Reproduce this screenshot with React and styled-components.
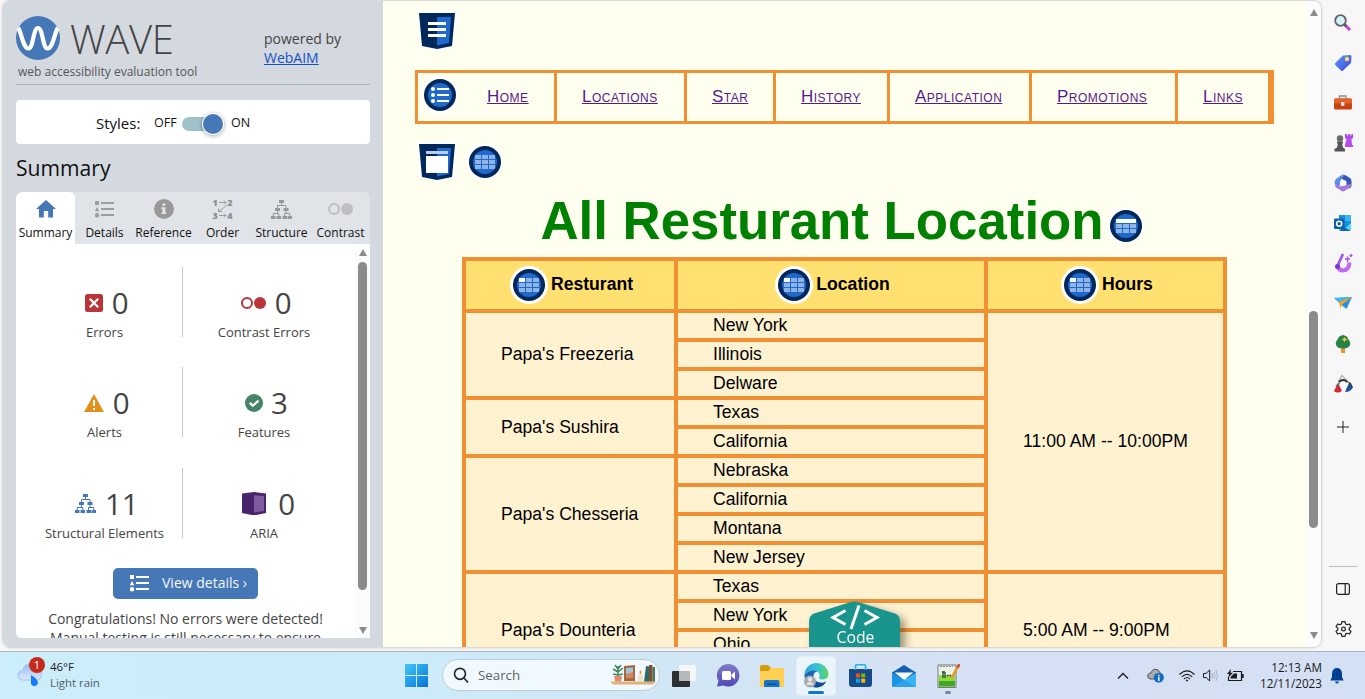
import React from "react";
import styled, { createGlobalStyle } from "styled-components";

const Global = createGlobalStyle`
  * { box-sizing: border-box; }
  html, body { margin: 0; padding: 0; overflow: hidden; background: #f7f7f7; }
  svg { display: block; flex: none; }
`;

const UI = `"Open Sans", "Noto Sans", sans-serif`;
const ARIAL = `"Liberation Sans", Arial, sans-serif`;
const ORANGE = "#f09033";
const BLUE = "#4677b7";

/* ---------- window ---------- */
const Screen = styled.div`
  width: 1365px; height: 699px; overflow: hidden;
  display: flex; flex-direction: column;
  background: #f7f7f7; font-family: ${UI};
`;
const Main = styled.div`
  height: 651px; display: flex; padding: 1px 0 4px 3px;
`;
const Frame = styled.div`
  width: 1318px; height: 646px; display: flex; overflow: hidden;
  border-radius: 8px; box-shadow: 0 0 3px rgba(0,0,0,.35);
`;

/* ---------- evaluation panel ---------- */
const Panel = styled.aside`
  width: 380px; background: #d4d9e0; padding: 0 13px 9px;
  display: flex; flex-direction: column;
`;
const PanelHead = styled.header`
  height: 84px; border-bottom: 1px solid #b0b4b9;
  display: flex; color: #444; flex: none;
`;
const Brand = styled.div`width: 248px; padding-top: 15px;`;
const BrandRow = styled.div`display: flex; gap: 10px; height: 44px;`;
const BrandName = styled.div`
  font: 300 40px/46px ${UI}; letter-spacing: -.35px; color: #444;
`;
const Tagline = styled.div`
  font-size: 12px; line-height: 16px; margin: 4px 0 0 2px; white-space: nowrap; color: #555; letter-spacing: .01px;
`;
const Powered = styled.div`
  padding-top: 28px; font-size: 14px; line-height: 19px; white-space: nowrap;
  a { color: #1450c8; text-decoration: underline; }
`;
const StylesBox = styled.div`
  margin-top: 15px; height: 44px; background: #fff; border-radius: 4px; flex: none;
  display: flex; align-items: center; padding-left: 80px; padding-top: 1px; color: #111;
  font-size: 12.5px;
`;
const StylesLabel = styled.span`font-size: 15px; width: 58px;`;
const OffLabel = styled.span`width: 28px;`;
const Track = styled.span`
  width: 41px; height: 14px; border-radius: 7px; background: linear-gradient(90deg,#9fc1c9 32px,transparent 32px);
  display: flex; justify-content: flex-end; align-items: center; margin: 3px 8px 0 0;
`;
const Knob = styled.span`
  width: 20px; height: 20px; border-radius: 50%; background: ${BLUE};
  box-shadow: 0 0 0 1px #fff, 0 1px 4px 1px rgba(0,0,0,.35);
`;
const Heading = styled.h2`
  margin: 9px 0 0; height: 39px; font: 400 21.1px/30px ${UI}; color: #111; flex: none;
`;
const Tabs = styled.nav`
  height: 52px; display: grid; grid-template-columns: repeat(6, 59px);
  background: #e0e3e8; border-radius: 6px 6px 0 0; overflow: hidden; flex: none;
`;
const Tab = styled.div`
  display: flex; flex-direction: column; align-items: center;
  padding-top: 5px; gap: 3px; font-size: 12px; line-height: 18px; color: #111; white-space: nowrap;
  background: ${(p) => (p.$on ? "#fff" : "transparent")};
  border-radius: ${(p) => (p.$on ? "6px 6px 0 0" : 0)};
`;
const TabIcon = styled.div`height: 24px; display: flex; align-items: center;`;
const Body = styled.section`
  height: 394px; display: flex; background: #fff; overflow: hidden;
  border-radius: 0 0 0 5px; flex: none;
`;
const Results = styled.div`
  width: 339px; padding-top: 23px; color: #444; display: flex; flex-direction: column; align-items: center;
`;
const Stats = styled.div`
  align-self: flex-start; margin-left: 9px;
  display: grid; grid-template-columns: 158px 162px; row-gap: 30.3px; flex: none;
`;
const Stat = styled.div`
  height: 70px; display: flex; flex-direction: column; align-items: center;
  padding: 16px 0 0 ${(p) => (p.$divided ? 2 : 0)}px;
  border-right: ${(p) => (p.$divided ? "1px solid #c4c6c8" : "0")};
`;
const StatTop = styled.div`
  height: 40px; display: flex; align-items: center; gap: ${(p) => p.$gap || 8.5}px; font-size: 29.5px; line-height: 40px;
  padding-left: ${(p) => (p.$gap > 10 ? 9 : 5)}px;
`;
const StatLabel = styled.div`font-size: 13px; line-height: 18px; white-space: nowrap;`;
const ViewButton = styled.button`
  margin-top: 30.4px; width: 145px; height: 31px; border: 0; border-radius: 5px; flex: none;
  background: ${BLUE}; color: #f4f7fb; font: 400 14px/20px ${UI}; padding: 0 0 0 17px;
  display: flex; align-items: center; gap: 13px; white-space: nowrap;
`;
const Message = styled.p`
  margin: 10px 0 0; font-size: 14px; line-height: 19px; text-align: center; white-space: nowrap; flex: none;
`;

/* ---------- scrollbar ---------- */
const Scroll = styled.div`
  width: 15px; background: #fcfcfc; display: flex; flex-direction: column; align-items: center;
  padding: ${(p) => p.$pad}; flex: none;
`;
const Arrow = styled.i`
  border: 4.5px solid transparent; border-top-width: 0; border-bottom: 7px solid #8b8b8b;
  transform: ${(p) => (p.$down ? "rotate(180deg)" : "none")};
  margin-top: ${(p) => (p.$down ? "auto" : 0)};
`;
const Thumb = styled.i`
  width: 9px; border-radius: 5px; background: #8b8b8b;
  height: ${(p) => p.$h}px; margin-top: ${(p) => p.$top}px;
`;

/* ---------- restaurant page ---------- */
const Page = styled.main`
  width: 923px; background: #fffff0; position: relative; overflow: hidden;
  font-family: ${ARIAL}; color: #000; padding: 8px 0 0 32px;
`;
const MarkerRow = styled.div`
  display: flex; align-items: center; gap: ${(p) => p.$gap || 0}px; height: 42px; padding-left: 1px;
  margin-top: ${(p) => p.$top || 0}px;
  svg + svg { margin-top: 2px; }
`;
const Menu = styled.ul`
  list-style: none; margin: 19px 0 0; padding: 0; width: 859px; height: 54px; display: flex;
  border: 3px solid ${ORANGE};
`;
const MenuItem = styled.li`
  width: ${(p) => p.$w}px; border-right: 3px solid ${ORANGE};
  display: flex; align-items: center; padding-left: ${(p) => (p.$first ? 3 : 25)}px;
  gap: 28px; font-size: 17px; letter-spacing: .5px; font-variant: small-caps; flex: none; white-space: nowrap;
  a { color: #551a8b; text-decoration: underline; }
`;
const MenuMark = styled.span`display: flex; margin-top: -4px;`;
const Caption = styled.h1`
  margin: 8px 0 0 47px; width: 765px; height: 67px; display: flex; justify-content: center; gap: 3px;
  font: 700 52.8px/62px ${ARIAL}; color: #008000; white-space: nowrap; padding-right: 4px;
  svg { margin-top: 17px; }
`;
const Table = styled.div`
  margin-left: 47px; width: 765px; padding: 4px; background: ${ORANGE};
  display: grid; grid-template-columns: 208px 306px 235px; gap: 4px;
  grid-template-rows: 48px repeat(13, 25px); font-size: 17.6px;
`;
const HeadCell = styled.div`
  background: #ffe070; display: flex; align-items: center; justify-content: center; gap: 3px; font-weight: 700;
  padding-left: 3px; span { margin-top: -2px; }
`;
const Cell = styled.div`
  background: #fef2d0; padding-left: 35px; display: flex; align-items: center; white-space: nowrap;
  grid-column: ${(p) => p.$col}; grid-row: ${(p) => p.$row} / span ${(p) => p.$span || 1};
`;
const CodeTab = styled.div`
  position: absolute; left: 426px; top: 600px; width: 91px; height: 60px; color: #fff;
  font-family: ${UI}; font-size: 15.8px; line-height: 20px; text-align: center; padding: 26px 0 0 2px;
  filter: drop-shadow(5px 4px 4px rgba(60,50,20,.5));
  svg { position: absolute; left: 0; top: 0; }
  span { position: relative; }
`;

/* ---------- browser side bar ---------- */
const Side = styled.aside`
  width: 44px; display: flex; flex-direction: column; align-items: center; padding-top: 1.5px;
`;
const SideSlot = styled.div`
  height: ${(p) => p.$h || 40.15}px; display: flex; align-items: center; justify-content: center; flex: none;
`;
const SideRule = styled.div`width: 28px; height: 1px; background: #bdbdbd; margin: 116px 0 2px; flex: none;`;

/* ---------- task bar ---------- */
const Taskbar = styled.footer`
  height: 48px; border-top: 1px solid #a8b3bb; flex: none; display: flex; color: #1a1a1a;
  background: linear-gradient(90deg, #ccedfa 0%, #cdebf9 30%, #d3e5f5 55%, #d6e0f4 75%, #d4e0f3 100%);
  font-size: 11.5px; line-height: 16px;
`;
const Weather = styled.div`
  width: 394px; padding: 4px 0 0 17px; display: flex; gap: 4px; white-space: nowrap;
`;
const Dim = styled.div`color: #52616b;`;
const WeatherText = styled.div`padding-top: 3px; font-size: 11.4px;`;
const Slot = styled.div`
  width: 44px; height: 47px; display: flex; align-items: center; justify-content: center; flex: none;
  position: relative;
`;
const ActiveTile = styled.div`
  width: 38px; height: 38px; border-radius: 4px; background: #e9f4fb; box-shadow: 0 0 0 1px rgba(255,255,255,.35);
  display: flex; align-items: center; justify-content: center;
`;
const Pip = styled.i`
  position: absolute; bottom: 5px; height: 3px; border-radius: 2px;
  width: ${(p) => p.$w}px; background: ${(p) => p.$c};
`;
const Search = styled.div`
  width: 218px; height: 32px; border-radius: 17px; background: #f0f9fd; border: 1px solid #b9cfdb;
  margin: 7px 2px 0 4px; padding: 0 3px 0 10px; display: flex; align-items: center; gap: 9px;
  font-size: 13.3px; color: #5d666c; flex: none;
  span { flex: 1; }
`;
const Tray = styled.div`
  margin-left: auto; display: flex; align-items: center; padding-right: 21px; height: 47px;
`;
const TraySlot = styled.div`width: ${(p) => p.$w}px; display: flex; justify-content: ${(p) => p.$end ? "flex-end" : "flex-start"}; flex: none;`;
const Clock = styled.div`width: 79px; text-align: right; font-size: 11.7px; white-space: nowrap; line-height: 16.5px; margin-top: -1px;`;

/* ---------- drawings ---------- */
const WaveLogo = () => (
  <svg width="44" height="44" viewBox="0 0 44 44">
    <circle cx="22" cy="22" r="22" fill={BLUE} />
    <path d="M2.200 12C5 15 7 32.500 12.500 32.500C17.500 32.500 17 12 22 12C27 12 26.500 32.500 31.500 32.500C37 32.500 39 15 41.800 12" fill="none" stroke="#fff" strokeWidth="4.200" />
  </svg>
);
const ListGlyph = ({ c = "#9a9ea2" }) => (
  <svg width="19" height="17" viewBox="0 0 19 17" fill={c}>
    <path d="M0 0h4v4H0zM2 6l2.300 4.300H-.3zM6 1h13v2H6zM6 7h13v2H6zM6 13h13v2H6z" />
    <circle cx="2" cy="14.300" r="2.200" />
  </svg>
);
const Home = () => (
  <svg width="20" height="18" viewBox="0 0 20 18"><path d="M10 0L20 9H17V17.500H12.200V11H7.800V17.500H3V9H0z" fill={BLUE} /></svg>
);
const Info = () => (
  <svg width="20" height="20" viewBox="0 0 20 20"><circle cx="10" cy="10" r="10" fill="#999" /><path d="M8.600 4.500h2.600v2.300H8.600zM7.500 8.300h3.800v5.200h1v1.600H7.500v-1.600h1V9.900h-1z" fill="#e6e8eb" /></svg>
);
const OrderGlyph = styled.div`
  position: relative; width: 20px; height: 22px; color: #8c8f92; font: 700 9px/9px ${UI};
  display: flex; flex-direction: column; justify-content: space-between;
  svg { position: absolute; left: 0; top: 1px; }
`;
const Pair = styled.span`display: flex; justify-content: space-between;`;
const Order = () => (
  <OrderGlyph>
    <Pair><b>1</b><b>2</b></Pair>
    <Pair><b>3</b><b>4</b></Pair>
    <svg width="20" height="20" viewBox="0 0 20 20" fill="none" stroke="#9a9da0"><path d="M6 3.500h7M11 1.500l2 2l-2 2M6 16.500h7M11 14.500l2 2l-2 2M13.500 6.500L5.500 12.500M5.500 9.500v3h3.500" /></svg>
  </OrderGlyph>
);
const Tree = ({ c = "#96999c" }) => (
  <svg width="21" height="19" viewBox="0 0 21 19" fill={c}>
    <path d="M8 0h5v3H8zM4 8h5v3H4zM12.500 8h5v3h-5zM0 16h4.500v3H0zM5.500 16H10v3H5.500zM11.500 16H16v3h-4.500zM16.500 16H21v3h-4.500z" />
    <path d="M10.500 3v2.500M6.500 8V5.500H15V8M6.500 11v2.500M2.200 16v-2.500H7.800V16M15 11v2.500M13.500 16v-2.500H18.800V16" fill="none" stroke={c} strokeWidth="1" />
  </svg>
);
const Rings = ({ c, s = 12, w = 25 }) => (
  <svg width={w} height={s} viewBox={`0 0 ${w} ${s}`}>
    <circle cx={s / 2} cy={s / 2} r={s / 2 - 1} fill="none" stroke={c} strokeWidth="2" />
    <circle cx={w - s / 2} cy={s / 2} r={s / 2} fill={c} />
  </svg>
);
const ErrorMark = () => (
  <svg width="18" height="18" viewBox="0 0 18 18"><rect width="18" height="18" rx="2.500" fill="#b93538" /><path d="M4.800 4.800l8.400 8.400M13.200 4.800l-8.400 8.400" stroke="#fff" strokeWidth="2.200" /></svg>
);
const AlertMark = () => (
  <svg width="20" height="18" viewBox="0 0 20 18"><path d="M10 0L20 18H0z" fill="#e48f1a" /><path d="M9 6h2v6H9zM9 14h2v2H9z" fill="#fff" /></svg>
);
const CheckMark = () => (
  <svg width="18" height="18" viewBox="0 0 18 18"><circle cx="9" cy="9" r="9" fill="#458466" /><path d="M4.800 8.800l3 3l5.700-5.200" fill="none" stroke="#fff" strokeWidth="2.200" /></svg>
);
const AriaMark = () => (
  <svg width="24" height="23" viewBox="0 0 24 23"><path d="M0 1.500L12 0L24 1.500V21L12 23.500L0 21z" fill="#48256b" /><path d="M12 3.300L22 4V19L12 20.500z" fill="#7f5c9e" /></svg>
);

const Shield = ({ kind }) => (
  <svg width="42" height="42" viewBox="0 0 42 42">
    <path d="M0 1L42 1L39 37.500L21 42L3.500 37.500z" fill="#fff" />
    <path d="M3 4H39L36 37L21 40L6 37z" fill="#01285a" />
    <path d="M21 8H35L33 34L21 36.500z" fill="#1f69cb" />
    {kind === "header" ? (
      <path d="M12 13h18v3H12zM12 19h18v3H12zM12 25h18v3H12z" fill="#fff" />
    ) : (
      <>
        <path d="M10 11h22v3H10z" fill="#b8cdeb" />
        <path d="M10 16h22v17H10z" fill="#fff" />
      </>
    )}
  </svg>
);
const Badge = ({ children }) => (
  <svg width="38" height="38" viewBox="0 0 38 38">
    <circle cx="19" cy="19" r="19" fill="#fff" />
    <circle cx="19" cy="19" r="16" fill="#01285a" />
    <circle cx="19" cy="19" r="12" fill="#1f69cb" />
    {children}
  </svg>
);
const GridMark = ({ head }) => (
  <Badge>
    {[0, 1, 2].map((r) => [0, 1, 2].map((c) => (
      <rect key={`${r}${c}`} x={9 + c * 7} y={12 + r * 5} width="6" height="4" fill={head === "first" && r + c === 0 ? "#fff" : "#8fb3e5"} />
    )))}
    {head === "row" && <rect x="9" y="12" width="20" height="4" fill="#fff" />}
  </Badge>
);
const ListMark = () => (
  <Badge>
    <path d="M16 12h12v2H16zM16 18h12v2H16zM16 24h12v2H16z" fill="#fff" />
    <circle cx="12" cy="13" r="2" fill="#fff" /><circle cx="12" cy="19" r="2" fill="#fff" /><circle cx="12" cy="25" r="2" fill="#fff" />
  </Badge>
);

const sideIcons = [
  <svg width="18" height="18" viewBox="0 0 18 18"><path d="M10 10l6 6" stroke="#c239e8" strokeWidth="3" /><path d="M9 9l3 3" stroke="#555" strokeWidth="2.500" /><circle cx="6.500" cy="6.500" r="5.300" fill="#d5f0fb" stroke="#626568" strokeWidth="1.800" /></svg>,
  <svg width="18" height="18" viewBox="0 0 18 18"><defs><linearGradient id="tag" x2="1" y2="1"><stop stopColor="#5a9bff" /><stop offset="1" stopColor="#4246d8" /></linearGradient></defs><path d="M9 1.500L16 1Q17.500 1 17.500 2.500L17 9L9 16.500Q8 17.500 7 16.500L1.300 11Q.5 10 1.300 9z" fill="url(#tag)" /><circle cx="13" cy="5" r="2.200" fill="#ffd95b" /></svg>,
  <svg width="18" height="15" viewBox="0 0 18 15"><path d="M5.500 4V1H12V4" fill="none" stroke="#8d8f93" strokeWidth="1.300" /><rect x="0" y="3.500" width="18" height="11" rx="1.500" fill="#c8430f" /><path d="M0 5q0-1.500 1.500-1.500h15Q18 3.500 18 5v3.500H0z" fill="#e2622b" /><rect x="7" y="7" width="3.500" height="4" rx="1" fill="#d9dce0" /></svg>,
  <svg width="19" height="19" viewBox="0 0 19 19"><path d="M11 1h1.800v1.500h1.300V1h2v1.500h1.300V1H19v4l-1.500 1l.5 6h1v2h-8v-2l1.500-6L11 5z" fill="#b74bea" /><circle cx="6" cy="5.500" r="3.200" fill="#6a6b6e" /><path d="M3 8.500h6v2H8l1 4l2 1.500v2.500H.5V16L3 14.500L4 10.500H3z" fill="#555659" /></svg>,
  <svg width="18" height="18" viewBox="0 0 18 18"><path d="M2 5L8 .8Q10 0 11.500 1L8.500 4Q6 6 6 9L5.500 13L2 11Q.5 10 .5 8Z" fill="#5b8ce8" /><path d="M11 1L16 4Q17.500 5 17.500 7V12Q17 14 15 14.500L12.500 11V7.500L7.500 4.500z" fill="#3557b5" /><path d="M1 10L5.500 12.500L12 11L17 10Q17.500 12.500 16 13.500L10.500 17Q9 17.800 7.500 17L2 13.500Q.6 12.500 1 10z" fill="#a47bd8" /><circle cx="9" cy="9" r="3" fill="#f7f7f7" /></svg>,
  <svg width="18" height="16" viewBox="0 0 18 16"><path d="M5 0H17V15H5z" fill="#1490df" /><path d="M11 0h6v6h-6z" fill="#35b8f1" /><path d="M5 9l6.500 4L17 8v7H5z" fill="#50d9ff" /><path d="M10 12l7 4H5z" fill="#1066b5" /><rect y="3.500" width="10.500" height="10.500" rx="1" fill="#0f5fad" /><circle cx="5.200" cy="8.700" r="2.500" fill="none" stroke="#fff" strokeWidth="1.500" /></svg>,
  <svg width="19" height="20" viewBox="0 0 19 20"><path d="M3.500 13Q5 17.500 9 17.500Q15 17 15.500 9.500" fill="none" stroke="#c068ef" strokeWidth="4" /><path d="M3.500 13L8.500 2" stroke="#a35bea" strokeWidth="2.800" strokeLinecap="round" /><circle cx="3.500" cy="13.500" r="2.500" fill="#7b35d5" /><path d="M13.500 9V3.500M11 6h5M17 1v3M15.500 2.500h3" fill="none" stroke="#b052ee" strokeWidth="1.500" /></svg>,
  <svg width="18" height="13" viewBox="0 0 18 13"><path d="M0 1L18 0L12.500 12L8 8.500z" fill="#2a8fe8" /><path d="M0 1L18 0L5 5z" fill="#3fb8f5" /><path d="M5 5L18 0L7.500 8L6.500 12z" fill="#f5a11e" /></svg>,
  <svg width="16" height="18" viewBox="0 0 16 18"><path d="M6 12h4v6H6z" fill="#e49a26" /><path d="M8 0Q13 1 13 4Q16 7 15 10Q13 14 8 13.500Q3 14 1 10Q0 7 3 4Q3 1 8 0" fill="#27824a" /><path d="M9.500 2l1 1.500l1.800 1l-1.800 1l-1 1.500l-1-1.500l-1.800-1l1.800-1z" fill="#f5c73b" /></svg>,
  <svg width="19" height="20" viewBox="0 0 19 20"><path d="M4 8L8 1.500L13 7" fill="none" stroke="#bbb" strokeWidth="1.500" /><path d="M5 8Q9 4 13.500 8" fill="none" stroke="#333" strokeWidth="2" /><path d="M4 9L8 17Q3 20 0 17z" fill="#d22a32" /><path d="M1.500 12L6 7L5 12z" fill="#666" /><path d="M15 9L19 13Q17 18 11 18z" fill="#194f9c" /><path d="M13 7l4 2l2 5z" fill="#27313d" /></svg>,
  <svg width="12" height="12" viewBox="0 0 12 12" stroke="#222"><path d="M6 0V12M0 6H12" /></svg>,
];
const PanelIcon = () => (
  <svg width="14" height="12" viewBox="0 0 14 12" fill="none" stroke="#222" strokeWidth="1.200"><rect x=".6" y=".6" width="12.800" height="10.800" rx="2" /><path d="M9.200 .6V11.400" /></svg>
);
const Gear = () => (
  <svg width="17" height="18" viewBox="0 0 24 24" fill="none" stroke="#222" strokeWidth="1.700" strokeLinejoin="round"><path d="M9.800 1.500h4.400l.7 3.300l2.200 1.200l3.200-1.100l2.200 3.800l-2.500 2.300v2l2.500 2.300l-2.200 3.800l-3.200-1.100l-2.200 1.200l-.7 3.300H9.800l-.7-3.300L6.900 18l-3.200 1.100l-2.200-3.800L4 13v-2L1.500 8.700l2.200-3.800L6.900 6l2.200-1.200z" /><circle cx="12" cy="12" r="2.700" /></svg>
);

const WeatherIcon = styled.div`
  position: relative; width: 29px; height: 34px; 
  svg { position: absolute; left: 0; top: 0; }
  span { position: absolute; left: 12px; top: 1px; width: 16px; text-align: center; color: #fff; font-size: 11px; line-height: 15px; }
`;
const Rain = () => (
  <WeatherIcon>
    <svg width="29" height="34" viewBox="0 0 29 34">
      <defs><linearGradient id="cl" x2="0" y2="1"><stop stopColor="#9dbcf4" /><stop offset="1" stopColor="#dbe8fb" /></linearGradient></defs>
      <path d="M5 24Q1 23 1 19.500Q1 15 6 14.500Q7 8 13 8L24 15Q26 23 20 24z" fill="url(#cl)" stroke="#8daaea" strokeWidth=".6" />
      <path d="M14 19Q21 23 21 27A3.700 3.700 0 0 1 14 28z" fill="#147eff" />
      <circle cx="20" cy="9" r="8" fill="#c42b1c" />
    </svg>
    <span>1</span>
  </WeatherIcon>
);
const Windows = () => (
  <svg width="23" height="23" viewBox="0 0 23 23"><defs><linearGradient id="win" x2="1" y2="1"><stop stopColor="#43c8f8" /><stop offset="1" stopColor="#0673d4" /></linearGradient></defs><path d="M0 0h11v11H0zM12 0h11v11H12zM0 12h11v11H0zM12 12h11v11H12z" fill="url(#win)" /></svg>
);
const Lens = () => (
  <svg width="16" height="16" viewBox="0 0 16 16" fill="none" stroke="#23282b" strokeWidth="1.700"><circle cx="7" cy="6.800" r="5.500" /><path d="M11 11L15 15.500" /></svg>
);
const Shelf = () => (
  <svg width="46" height="22" viewBox="0 0 46 22">
    <path d="M0 17.500h46L43 20.500H3z" fill="#dfb27c" />
    <path d="M4 12h8l-1 5.500H5z" fill="#e38b6c" />
    <path d="M8 12V2M8 8L3 5M8 8l5-4M8 11l-5-1M8 11l5-1M8 5L5 1M8 5l3-4" stroke="#47875b" strokeWidth="1.500" />
    <path d="M14 2l11-1v16H14z" fill="#a5683f" /><path d="M16 4l7-.5V14h-7z" fill="#9cc7dc" /><path d="M16 10l7-2v6h-7z" fill="#d78662" />
    <path d="M28 11h5v6.500h-5z" fill="#f1e2c5" /><path d="M30.500 6q2 2.500 0 4.500q-2-2 0-4.500" fill="#ef9d2d" />
    <path d="M34 17.500L36 2l3 .5V17.500z" fill="#2d6a6d" /><path d="M39 1h3.500v16.500H39z" fill="#80502d" /><path d="M42.500 3H45v14.500h-2.500z" fill="#4a7361" />
  </svg>
);
const TaskView = () => (
  <svg width="24" height="22" viewBox="0 0 24 22"><rect x="7" y="0" width="17" height="16" rx="1" fill="#f4f6f8" /><rect y="6" width="18" height="16" rx="1" fill="#2d2f31" /><path d="M7 6h11v10H7z" fill="#b5b8ba" /></svg>
);
const Chat = () => (
  <svg width="23" height="23" viewBox="0 0 23 23"><defs><linearGradient id="ch" x2="0" y2="1"><stop stopColor="#8278c8" /><stop offset="1" stopColor="#4e4ab7" /></linearGradient></defs><path d="M11.500 0A11.300 11.300 0 1 1 6.500 21.600L0 22.500L1.500 17A11.300 11.300 0 0 1 11.500 0z" fill="url(#ch)" /><rect x="5" y="7" width="9" height="9" rx="1.500" fill="#fff" /><path d="M14.500 10.500L18 7.500V15.500L14.500 12.500z" fill="#fff" /></svg>
);
const Folder = () => (
  <svg width="24" height="22" viewBox="0 0 24 22"><path d="M0 2Q0 0 2 0H8l3 3H22q2 0 2 2V10H0z" fill="#d79a0c" /><path d="M0 6h8l3-3h11q2 0 2 2v15.500q0 1.500-2 1.500H1.500Q0 22 0 20.500z" fill="#ffd052" /><path d="M4 22V17q0-2 2-2h11.500q2 0 2 2V22z" fill="#1774ca" /><path d="M7 18.500h9.500V20H7z" fill="#0b4e93" /></svg>
);
const Edge = () => (
  <svg width="25" height="25" viewBox="0 0 25 25">
    <defs><linearGradient id="ed" x2="1"><stop stopColor="#2fa6e0" /><stop offset=".55" stopColor="#34c3d0" /><stop offset="1" stopColor="#62d65c" /></linearGradient></defs>
    <path d="M12.500 0A12 12 0 0 1 24.500 11Q24.500 16 19 16.500Q15 16.500 15 14.500Q17 11 13.500 8.500Q7 5 .5 12A12 12 0 0 1 12.500 0z" fill="url(#ed)" />
    <path d="M.5 12Q7 5 13.500 8.500Q9 9 9.500 14.500Q11 20.500 21.500 19.500Q18 24.500 12 24.500A12 12 0 0 1 .5 12z" fill="#1866b8" />
    <path d="M9 11Q8 18 14 20Q19 21 22.500 18Q19 24.500 12 24.500Q5 20 9 11z" fill="#114c92" />
    <circle cx="6" cy="18.500" r="6" fill="#a8aaad" /><circle cx="6" cy="16.300" r="2.200" fill="#e2e3e4" /><path d="M2.500 22q0-3 3.500-3t3.500 3z" fill="#e2e3e4" />
  </svg>
);
const Store = () => (
  <svg width="23" height="24" viewBox="0 0 23 24"><path d="M0 5H23V20q0 3-3 3H3q-3 0-3-3z" fill="#184a86" /><path d="M6.500 6V2q0-1.300 1.300-1.300h7.400Q16.500.7 16.500 2V6" fill="none" stroke="#28b2ed" strokeWidth="1.600" /><path d="M7 9.500h4v4H7z" fill="#f25022" /><path d="M12.200 9.500h4v4h-4z" fill="#7fba00" /><path d="M7 14.700h4v4H7z" fill="#00a4ef" /><path d="M12.200 14.700h4v4h-4z" fill="#ffb900" /></svg>
);
const Mail = () => (
  <svg width="24" height="22" viewBox="0 0 24 22"><path d="M0 7.500L12 0L24 7.500V13H0z" fill="#145fac" /><path d="M2.500 7.500h19L12 15z" fill="#f7fbff" /><path d="M0 7.500L24 22H1.500Q0 22 0 20.500z" fill="#1c93e5" /><path d="M24 7.500V20.500Q24 22 22.500 22H1L24 7.500z" fill="#37b4f4" /><path d="M12 15L24 22H1z" fill="#28a3ec" /></svg>
);
const Notepad = () => (
  <svg width="23" height="24" viewBox="0 0 23 24"><path d="M1 1H19V23.500H1z" fill="#eef2e8" stroke="#777" /><path d="M2 11H18V22.500H2z" fill="#8ddc3c" /><path d="M2 17H18V22.500H2z" fill="#42a52c" /><path d="M3 2.500h13" stroke="#888" strokeDasharray="2 1" /><path d="M6 14V8M8 14V8M5 8h3M10 11.500h1.500M12.500 11.500H14" stroke="#243" strokeWidth="1.300" /><path d="M21.500 1.500L14.500 14" stroke="#e79a2e" strokeWidth="2.600" /><path d="M22.500 0L20.500 3.500" stroke="#cf4e3b" strokeWidth="2.600" /></svg>
);
const Cloud = () => (
  <svg width="17" height="15" viewBox="0 0 17 15"><path d="M3 11Q0 10 .8 7Q1.500 5 4 5Q5 1 9 1.300Q12 1.500 13 5Q15.500 5.500 16 8V11z" fill="#a8aaac" stroke="#555" /><circle cx="11.700" cy="9.800" r="4.900" fill="#0f6cc9" /><path d="M11 6.800h1.500v1.400H11zM11 9h1.500v4H11z" fill="#fff" /></svg>
);
const Wifi = () => (
  <svg width="16" height="12" viewBox="0 0 16 12" fill="none" stroke="#1c1c1c" strokeWidth="1.100"><path d="M.5 4.500Q8-2.800 15.500 4.500M2.800 6.800Q8 1.800 13.200 6.800M5 9Q8 6 11 9" /><circle cx="8" cy="10.500" r="1" fill="#1c1c1c" stroke="none" /></svg>
);
const Volume = () => (
  <svg width="16" height="13" viewBox="0 0 16 13" fill="none" stroke="#1c1c1c"><path d="M.5 4.500H3L6.700 1V12L3 8.500H.5z" /><path d="M9 4.500Q10 6.500 9 8.500" stroke="#8a95a5" /><path d="M11 2.800Q13 6.500 11 10.200M13 1Q16 6.500 13 12" stroke="#a9b5c6" /></svg>
);
const Battery = () => (
  <svg width="17" height="14" viewBox="0 0 17 14"><path d="M6 2.500H14.500V11.500H1.500V8" fill="none" stroke="#1c1c1c" strokeWidth="1.200" /><path d="M7 4.500h3v5H3.500V8z" fill="#1c1c1c" /><path d="M15 5h1.700v4H15z" fill="#1c1c1c" /><path d="M4 0L0 5h2.200L1 9L6 3.700H3.500z" fill="#1c1c1c" /></svg>
);
const Bell = () => (
  <svg width="14" height="16" viewBox="0 0 14 16" fill="#003e92"><path d="M2 5.500Q2.500 0 7 0Q11.500 0 12 5.500V9L13.700 12.500H.3L2 9z" /><path d="M5 13.500H9Q8.500 15.500 7 15.500Q5.500 15.500 5 13.500z" /></svg>
);

/* ---------- data ---------- */
const tabs = [
  ["Summary", <Home />], ["Details", <ListGlyph />], ["Reference", <Info />],
  ["Order", <Order />], ["Structure", <Tree />], ["Contrast", <Rings c="#bdbfc2" />],
];
const stats = [
  [<ErrorMark />, "0", "Errors"], [<Rings c="#b93538" />, "0", "Contrast Errors"],
  [<AlertMark />, "0", "Alerts"], [<CheckMark />, "3", "Features", 8],
  [<Tree c={BLUE} />, "11", "Structural Elements"], [<AriaMark />, "0", "ARIA", 12.5],
];
const menu = [["Home", 139], ["Locations", 130], ["Star", 89], ["History", 114], ["Application", 142], ["Promotions", 146], ["Links", 93]];
const cities = ["New York", "Illinois", "Delware", "Texas", "California", "Nebraska", "California", "Montana", "New Jersey", "Texas", "New York", "Ohio", ""];
const shops = [["Papa's Freezeria", 2, 3], ["Papa's Sushira", 5, 2], ["Papa's Chesseria", 7, 4], ["Papa's Dounteria", 11, 4]];

export default function App() {
  return (
    <Screen>
      <Global />
      <Main>
        <Frame>
          <Panel>
            <PanelHead>
              <Brand>
                <BrandRow><WaveLogo /><BrandName>WAVE</BrandName></BrandRow>
                <Tagline>web accessibility evaluation tool</Tagline>
              </Brand>
              <Powered>powered by<br /><a>WebAIM</a></Powered>
            </PanelHead>
            <StylesBox>
              <StylesLabel>Styles:</StylesLabel><OffLabel>OFF</OffLabel>
              <Track><Knob /></Track><span>ON</span>
            </StylesBox>
            <Heading>Summary</Heading>
            <Tabs>
              {tabs.map(([name, icon], i) => (
                <Tab key={name} $on={i === 0}><TabIcon>{icon}</TabIcon>{name}</Tab>
              ))}
            </Tabs>
            <Body>
              <Results>
                <Stats>
                  {stats.map(([icon, n, label, gap], i) => (
                    <Stat key={label} $divided={i % 2 === 0}>
                      <StatTop $gap={gap}>{icon}<span>{n}</span></StatTop>
                      <StatLabel>{label}</StatLabel>
                    </Stat>
                  ))}
                </Stats>
                <ViewButton><ListGlyph c="#fff" />View details ›</ViewButton>
                <Message>Congratulations! No errors were detected!<br />Manual testing is still necessary to ensure</Message>
              </Results>
              <Scroll $pad="5px 0 4px"><Arrow /><Thumb $top={6} $h={328} /><Arrow $down /></Scroll>
            </Body>
          </Panel>
          <Page>
            <MarkerRow><Shield kind="header" /></MarkerRow>
            <Menu>
              {menu.map(([name, w], i) => (
                <MenuItem key={name} $w={w} $first={i === 0}>
                  {i === 0 && <MenuMark><ListMark /></MenuMark>}
                  <a>{name}</a>
                </MenuItem>
              ))}
            </Menu>
            <MarkerRow $top={16} $gap={8}><Shield kind="main" /><GridMark /></MarkerRow>
            <Caption>All Resturant Location<GridMark head="row" /></Caption>
            <Table>
              {["Resturant", "Location", "Hours"].map((h) => (
                <HeadCell key={h}><GridMark head="first" /><span>{h}</span></HeadCell>
              ))}
              {shops.map(([name, row, span]) => <Cell key={name} $col={1} $row={row} $span={span}>{name}</Cell>)}
              {cities.map((c, i) => <Cell key={i} $col={2} $row={i + 2}>{c}</Cell>)}
              <Cell $col={3} $row={2} $span={9}>11:00 AM -- 10:00PM</Cell>
              <Cell $col={3} $row={11} $span={4}>5:00 AM -- 9:00PM</Cell>
            </Table>
            <CodeTab>
              <svg width="91" height="60" viewBox="0 0 91 60">
                <path d="M0 20Q0 14.500 5 12.500L42 1Q45.500 0 49 1L86 12.500Q91 14.500 91 20V60H0z" fill="#1a958e" />
                <path d="M36.500 9.500L24 16.500L36.500 23.500M55.500 9.500L68 16.500L55.500 23.500M50 4.500L42 28" fill="none" stroke="#fff" strokeWidth="3" />
              </svg>
              <span>Code</span>
            </CodeTab>
          </Page>
          <Scroll $pad="8px 0 8px"><Arrow /><Thumb $top={295} $h={217} /><Arrow $down /></Scroll>
        </Frame>
        <Side>
          {sideIcons.map((icon, i) => <SideSlot key={i} $h={i === 10 ? 46 : 40.15}>{icon}</SideSlot>)}
          <SideRule />
          <SideSlot>
            <PanelIcon />
          </SideSlot>
          <SideSlot><Gear /></SideSlot>
        </Side>
      </Main>
      <Taskbar>
        <Weather><Rain /><WeatherText>46°F<Dim>Light rain</Dim></WeatherText></Weather>
        <Slot><Windows /></Slot>
        <Search><Lens /><span>Search</span><Shelf /></Search>
        <Slot><TaskView /></Slot>
        <Slot><Chat /></Slot>
        <Slot><Folder /></Slot>
        <Slot><ActiveTile><Edge /></ActiveTile><Pip $w={16} $c="#0a78d4" /></Slot>
        <Slot><Store /></Slot>
        <Slot><Mail /></Slot>
        <Slot><Notepad /><Pip $w={6} $c="#7d8790" /></Slot>
        <Tray>
          <TraySlot $w={30}><svg width="12" height="8" viewBox="0 0 12 8"><path d="M1 6.500L6 1.500L11 6.500" fill="none" stroke="#1c1c1c" strokeWidth="1.300" /></svg></TraySlot>
          <TraySlot $w={32}><Cloud /></TraySlot>
          <TraySlot $w={24}><Wifi /></TraySlot>
          <TraySlot $w={24}><Volume /></TraySlot>
          <TraySlot $w={16}><Battery /></TraySlot>
          <Clock>12:13 AM<br />12/11/2023</Clock>
          <TraySlot $w={22} $end><Bell /></TraySlot>
        </Tray>
      </Taskbar>
    </Screen>
  );
}
